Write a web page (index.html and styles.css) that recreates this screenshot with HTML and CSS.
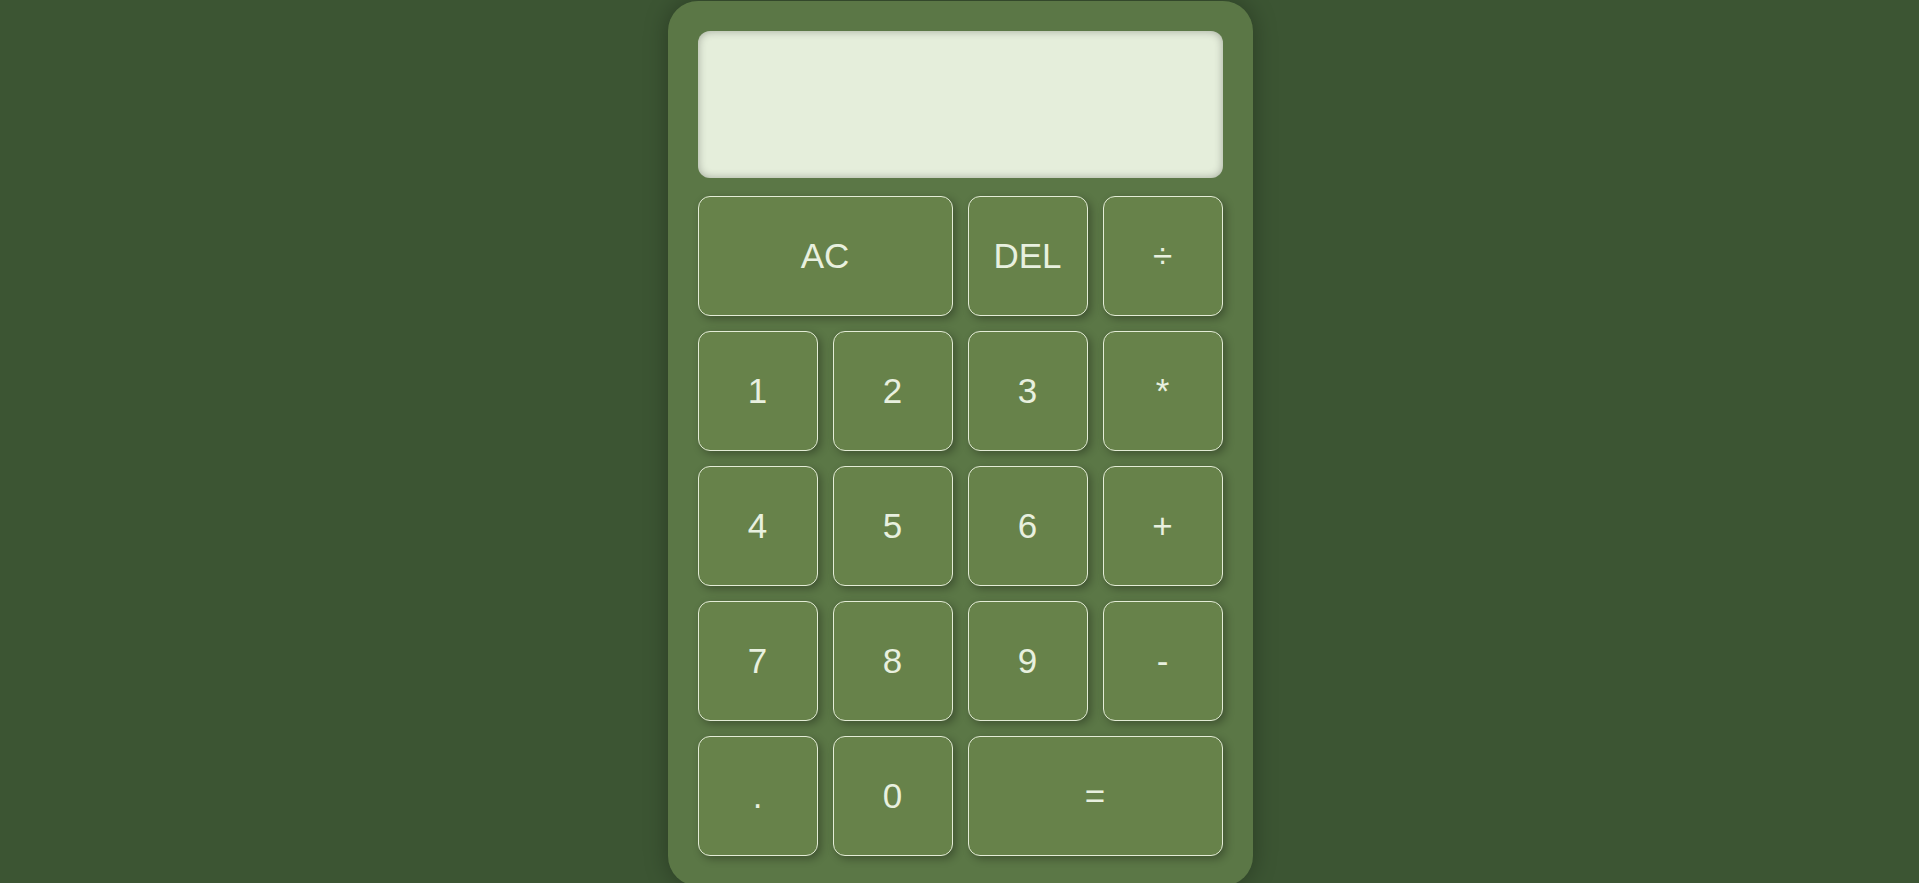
FILE: index.html
```html
<!DOCTYPE html>
<html lang="en">
<head>
  <meta charset="UTF-8">
  <meta name="viewport" content="width=device-width, initial-scale=1.0">
  <title>Calculator</title>
  <link rel="stylesheet" href="styles.css">
</head>
<body>
  <div class="calculator">
    <div class="display" id="display"></div>
    <div class="keys">
      <button class="key span-two">AC</button>
      <button class="key">DEL</button>
      <button class="key">÷</button>
      <button class="key">1</button>
      <button class="key">2</button>
      <button class="key">3</button>
      <button class="key">*</button>
      <button class="key">4</button>
      <button class="key">5</button>
      <button class="key">6</button>
      <button class="key">+</button>
      <button class="key">7</button>
      <button class="key">8</button>
      <button class="key">9</button>
      <button class="key">-</button>
      <button class="key">.</button>
      <button class="key">0</button>
      <button class="key span-two">=</button>
    </div>
  </div>
</body>
</html>
```

FILE: styles.css
```css
html {
  box-sizing: border-box;
}
*, *::before, *::after {
  box-sizing: inherit;
}
body {
  margin: 0;
  padding: 1px 0 0 1px;
  background: #3c5533;
  font-family: "Liberation Sans", Arial, sans-serif;
  display: flex;
  justify-content: center;
}
.calculator {
  width: 585px;
  padding: 30px;
  background: #5b7746;
  border-radius: 30px;
  box-shadow: 0 0 24px rgba(0, 0, 0, 0.3);
}
.display {
  height: 147px;
  background: #e5eedb;
  border-radius: 12px;
  box-shadow: inset 0 0 8px rgba(0, 0, 0, 0.3);
  margin-bottom: 18px;
}
.keys {
  display: grid;
  grid-template-columns: repeat(4, 120px);
  grid-auto-rows: 120px;
  gap: 15px;
}
.key {
  font-family: inherit;
  font-size: 35px;
  color: #e8f0df;
  background: #67824a;
  border: 1px solid #e3ecd6;
  border-radius: 12px;
  box-shadow: 3px 3px 8px rgba(0, 0, 0, 0.3);
  cursor: pointer;
  padding: 0;
}
.key.span-two {
  grid-column: span 2;
}
```
